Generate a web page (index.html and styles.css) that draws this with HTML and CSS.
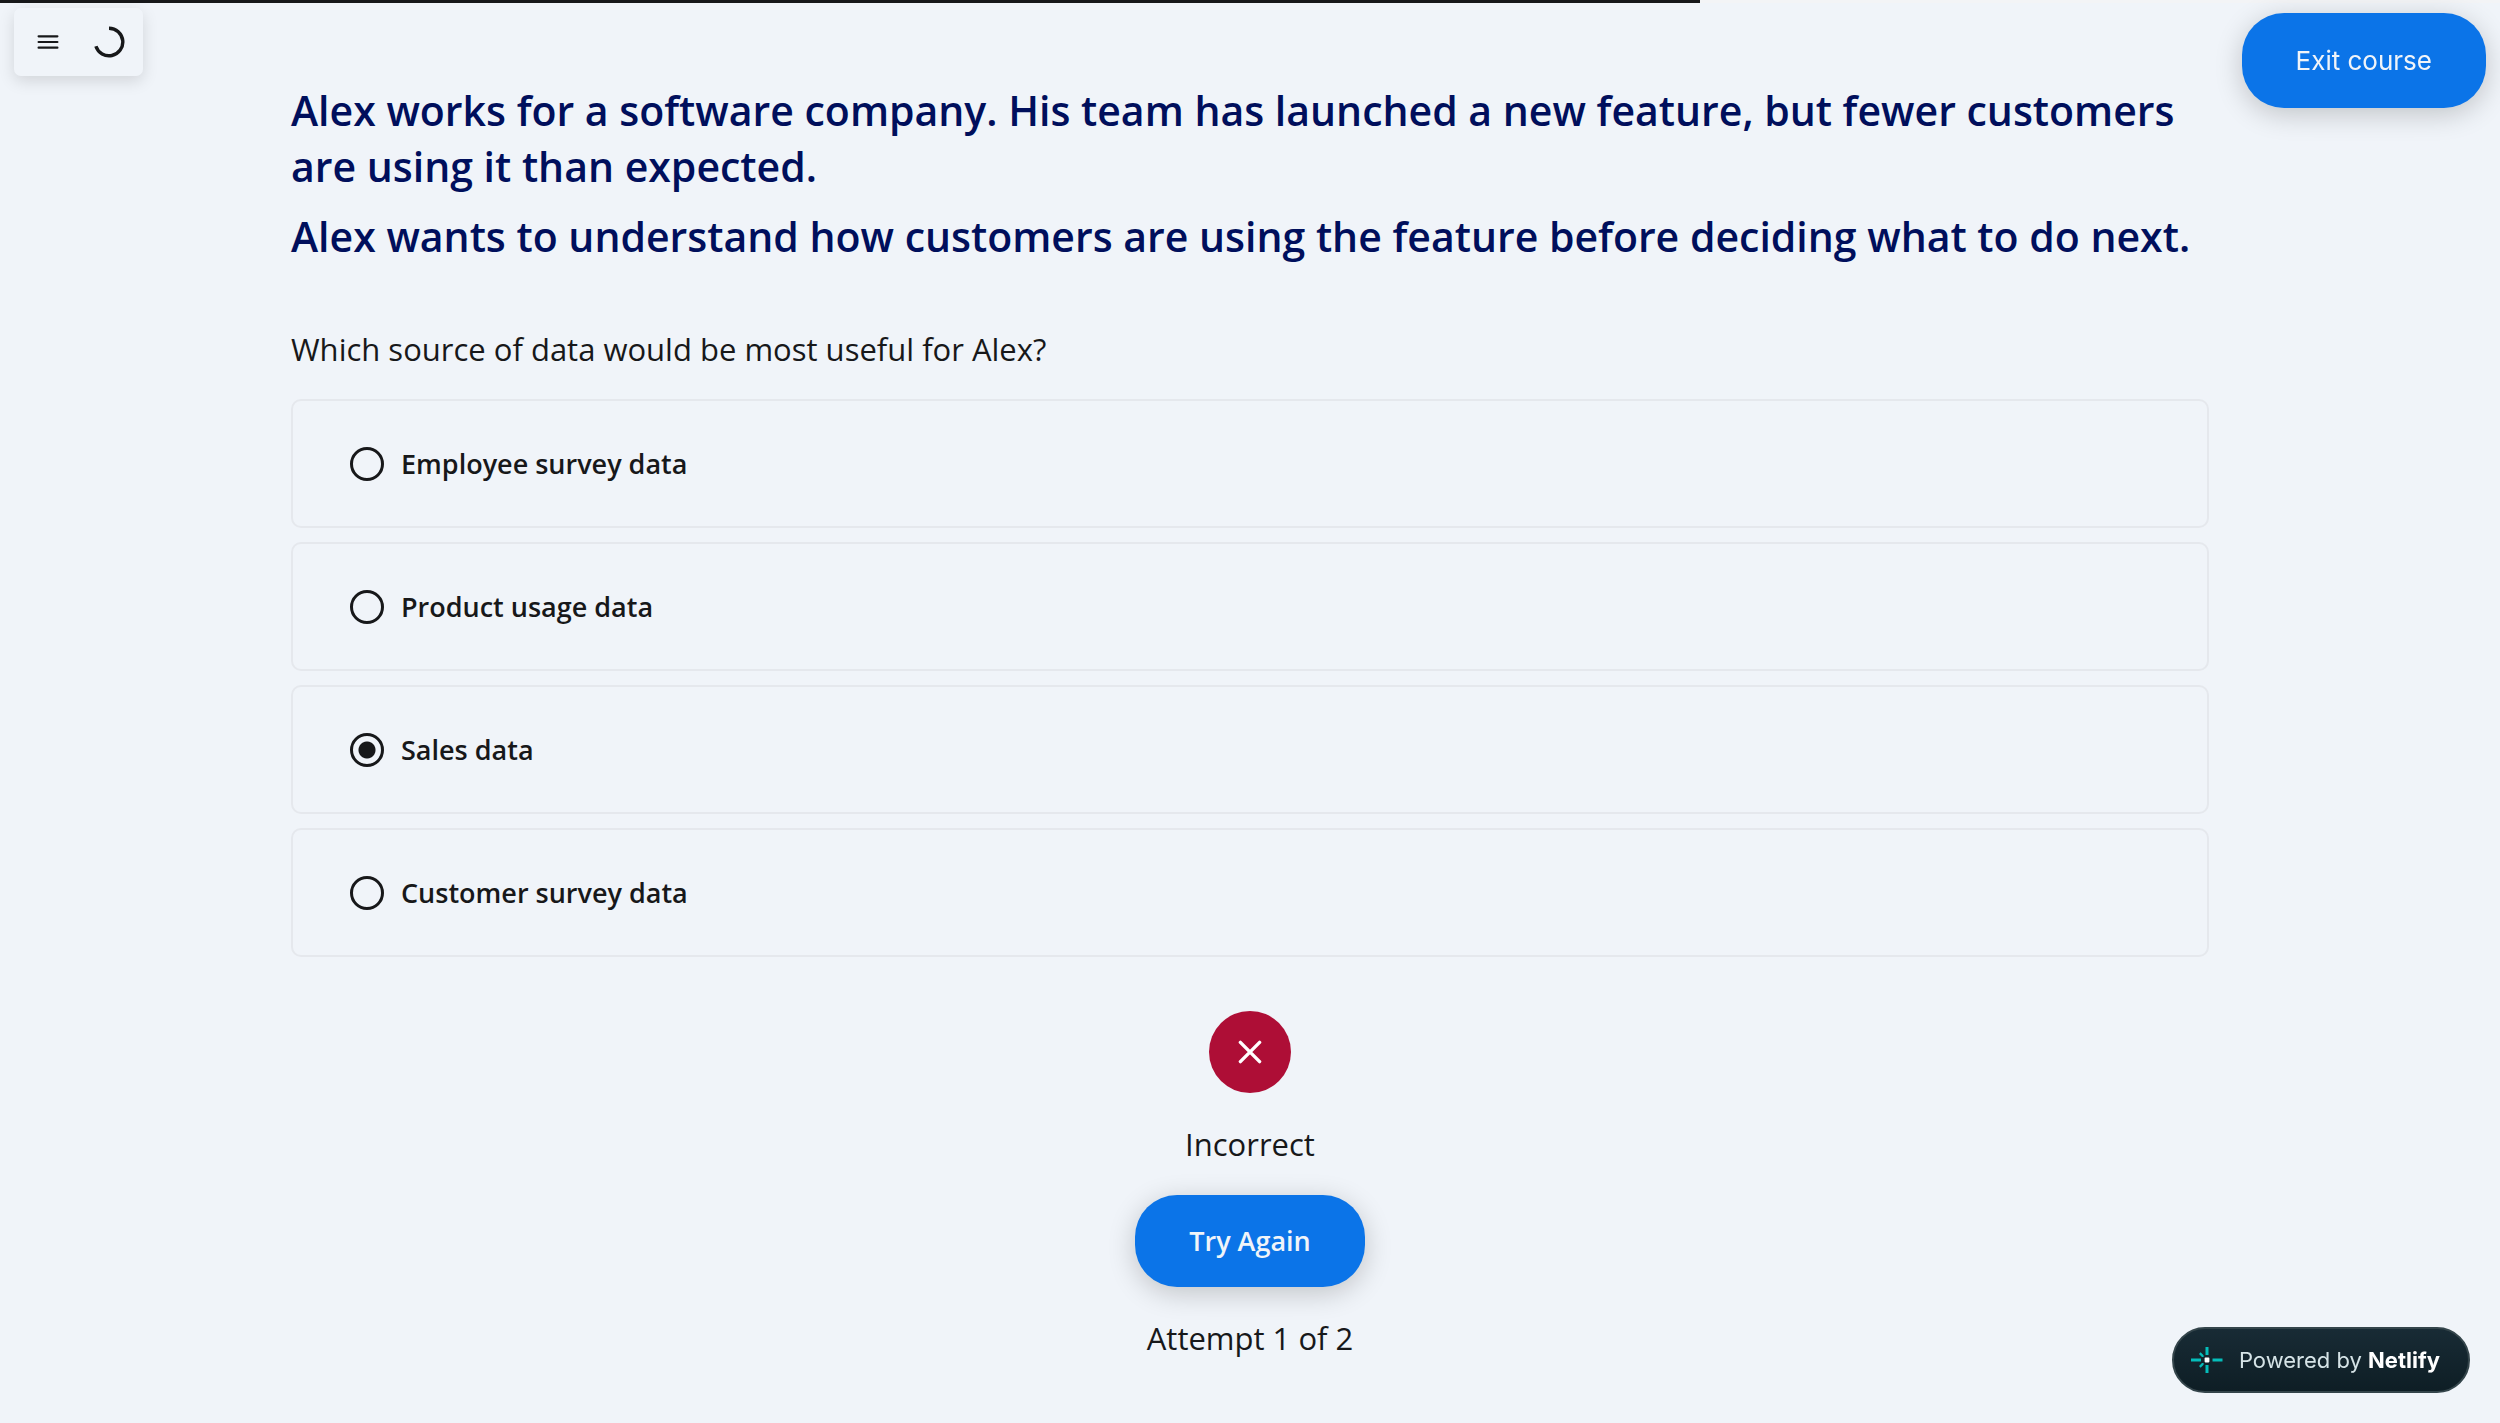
FILE: index.html
```html
<!DOCTYPE html>
<html lang="en">
<head>
    <meta charset="UTF-8">
    <meta name="viewport" content="width=device-width, initial-scale=1.0">
    <title>Knowledge Check</title>
    <link rel="stylesheet" href="styles.css">
</head>
<body>
    <div class="progress-track">
        <div class="progress-bar" style="width: 68%"></div>
    </div>

    <header class="top-bar">
        <div class="toolbar">
            <button class="icon-button" type="button" aria-label="Menu">
                <svg width="22" height="16" viewBox="0 0 22 16" fill="none" stroke="#17181a" stroke-width="2.2" stroke-linecap="round">
                    <path d="M1.6 2.3H20.4M1.6 8H20.4M1.6 13.7H20.4"/>
                </svg>
            </button>
            <button class="icon-button" type="button" aria-label="Progress">
                <svg width="32" height="32" viewBox="0 0 32 32" fill="none" stroke="#17181a" stroke-width="3.4">
                    <path d="M16 2.2A13.8 13.8 0 1 1 2.9 20.3"/>
                </svg>
            </button>
        </div>
        <button class="exit" type="button">Exit course</button>
    </header>

    <main class="question">
        <h1 class="scenario">Alex works for a software company. His team has launched a new feature, but fewer customers are using it than expected.</h1>
        <h1 class="scenario">Alex wants to understand how customers are using the feature before deciding what to do next.</h1>

        <form class="quiz">
            <fieldset class="options">
                <legend>Which source of data would be most useful for Alex?</legend>
                <label class="option"><input type="radio" name="source" value="employee">Employee survey data</label>
                <label class="option"><input type="radio" name="source" value="usage">Product usage data</label>
                <label class="option"><input type="radio" name="source" value="sales" checked>Sales data</label>
                <label class="option"><input type="radio" name="source" value="customer">Customer survey data</label>
            </fieldset>

            <!-- Answer feedback -->
            <div class="feedback">
                <div class="result-icon">
                    <svg width="24" height="24" viewBox="0 0 24 24" fill="none" stroke="#fff" stroke-width="3.4" stroke-linecap="round">
                        <path d="M2.4 2.4L21.6 21.6M21.6 2.4L2.4 21.6"/>
                    </svg>
                </div>
                <p>Incorrect</p>
                <button class="retry" type="reset">Try Again</button>
                <p>Attempt 1 of 2</p>
            </div>
        </form>
    </main>

    <a class="badge" href="#">
        <svg width="32" height="26" viewBox="0 0 32 26">
            <g fill="#05bdba">
                <path d="M14.5 0h3v8h-3zM14.5 18h3v8h-3zM0 11.5h10v3H0zM21.5 11.5h10v3h-10z"/>
                <path d="M8 6.9L9.6 5.3L12.6 8.3V9.9H11zM8 19.1L9.6 20.7L12.6 17.7V16.1H11z"/>
            </g>
            <rect x="13.6" y="10.6" width="4.8" height="4.8" rx="0.8" fill="#fff"/>
        </svg>
        <span>Powered by <strong>Netlify</strong></span>
    </a>
</body>
</html>
```

FILE: styles.css
```css
* {
    box-sizing: border-box;
}

body {
    margin: 0;
    min-height: 100vh;
    background-color: #f0f4f9;
    color: #17181a;
    font-family: "Open Sans", sans-serif;
    font-size: 31px;
    line-height: 42px;
}

button {
    border: none;
    cursor: pointer;
    font-family: inherit;
}

/* Course progress */
.progress-track {
    position: fixed;
    top: 0;
    left: 0;
    right: 0;
    height: 3px;
    background-color: #f3f4f6;
}

.progress-bar {
    height: 100%;
    background-color: #17181a;
}

/* Floating controls over the page */
.top-bar {
    position: fixed;
    top: 0;
    left: 0;
    right: 0;
    display: flex;
    justify-content: space-between;
    align-items: flex-start;
    padding: 8px 14px;
}

.toolbar {
    display: flex;
    justify-content: center;
    align-items: center;
    width: 129px;
    height: 68px;
    border-radius: 7px;
    background-color: #f0f4f9;
    box-shadow: 0 5px 16px rgba(0, 0, 0, 0.13);
}

.icon-button {
    display: flex;
    justify-content: center;
    align-items: center;
    width: 61px;
    height: 60px;
    padding: 0;
    background: none;
}

.exit,
.retry {
    border-radius: 42px;
    background-color: #0b74e8;
    color: #f0f4f9;
    font-size: 27px;
    line-height: 38px;
    box-shadow: 0 6px 28px rgba(0, 0, 0, 0.2);
}

.exit {
    margin-top: 5px;
    padding: 29px 54px 28px;
    font-family: Inter, sans-serif;
    font-size: 26px;
}

.retry {
    padding: 27px 54px;
    font-weight: 600;
}

/* Question */
.question {
    max-width: 1918px;
    margin: 0 auto;
    padding: 82px 0 48px;
}

.scenario {
    margin: 0 0 14px;
    color: #000f5c;
    font-size: 41px;
    font-weight: 600;
    line-height: 56px;
}

.quiz {
    margin-top: 64px;
}

.options {
    display: flex;
    flex-direction: column;
    gap: 14px;
    margin: 0;
    padding: 0;
    border: none;
}

.options legend {
    margin-bottom: 29px;
    padding: 0;
}

.option {
    display: flex;
    align-items: center;
    gap: 17px;
    min-height: 129px;
    padding: 0 57px;
    border: 2px solid #e5e8ed;
    border-radius: 10px;
    cursor: pointer;
    font-size: 27px;
    font-weight: 600;
}

.option input {
    appearance: none;
    width: 34px;
    height: 34px;
    margin: 0;
    border: 3px solid #17181a;
    border-radius: 50%;
}

.option input:checked {
    background: radial-gradient(circle, #17181a 8px, transparent 9px);
}

/* Feedback */
.feedback {
    display: flex;
    flex-direction: column;
    align-items: center;
    margin-top: 54px;
}

.feedback p {
    margin: 30px 0;
}

.result-icon {
    display: flex;
    justify-content: center;
    align-items: center;
    width: 82px;
    height: 82px;
    border-radius: 50%;
    background-color: #ae0e36;
}

/* Hosting badge */
.badge {
    position: fixed;
    right: 30px;
    bottom: 30px;
    display: flex;
    align-items: center;
    gap: 16px;
    padding: 15px 28px 15px 17px;
    border: 2px solid #34454b;
    border-radius: 33px;
    background: linear-gradient(#182b35, #0e1e25);
    color: #d5e3e6;
    font-family: Inter, sans-serif;
    font-size: 22px;
    line-height: 32px;
    text-decoration: none;
}

.badge strong {
    color: #fff;
    font-weight: 700;
}
```
